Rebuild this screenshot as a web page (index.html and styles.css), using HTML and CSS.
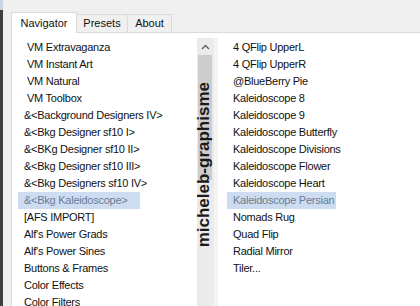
FILE: index.html
```
<!DOCTYPE html>
<html lang="en">
<head>
    <meta charset="UTF-8">
    <title>Filters Unlimited - Navigator</title>
    <link rel="stylesheet" href="styles.css">
</head>
<body>
    <div class="window">
        <div class="edge"></div>
        <div class="main">
            <div class="tabs">
                <div class="tab tab-nav active">Navigator</div>
                <div class="tab tab-presets">Presets</div>
                <div class="tab tab-about">About</div>
            </div>

            <div class="panel">
                <ul class="list list-left">
                    <li class="ind">VM Extravaganza</li>
                    <li class="ind">VM Instant Art</li>
                    <li class="ind">VM Natural</li>
                    <li class="ind">VM Toolbox</li>
                    <li>&amp;&lt;Background Designers IV&gt;</li>
                    <li>&amp;&lt;Bkg Designer sf10 I&gt;</li>
                    <li>&amp;&lt;BKg Designer sf10 II&gt;</li>
                    <li>&amp;&lt;Bkg Designer sf10 III&gt;</li>
                    <li>&amp;&lt;Bkg Designers sf10 IV&gt;</li>
                    <li class="sel">&amp;&lt;Bkg Kaleidoscope&gt;</li>
                    <li>[AFS IMPORT]</li>
                    <li>Alf's Power Grads</li>
                    <li>Alf's Power Sines</li>
                    <li>Buttons &amp; Frames</li>
                    <li>Color Effects</li>
                    <li>Color Filters</li>
                </ul>

                <div class="scrollbar">
                    <div class="arrow">
                        <svg width="9" height="6" viewBox="0 0 9 6">
                            <path d="M1 5 L4.5 1.5 L8 5" fill="none" stroke="#606060" stroke-width="1.3"/>
                        </svg>
                    </div>
                    <div class="thumb"></div>
                </div>
                <div class="splitter"></div>

                <ul class="list list-right">
                    <li>4 QFlip UpperL</li>
                    <li>4 QFlip UpperR</li>
                    <li>@BlueBerry Pie</li>
                    <li>Kaleidoscope 8</li>
                    <li>Kaleidoscope 9</li>
                    <li>Kaleidoscope Butterfly</li>
                    <li>Kaleidoscope Divisions</li>
                    <li>Kaleidoscope Flower</li>
                    <li>Kaleidoscope Heart</li>
                    <li class="sel">Kaleidoscope Persian</li>
                    <li>Nomads Rug</li>
                    <li>Quad Flip</li>
                    <li>Radial Mirror</li>
                    <li>Tiler...</li>
                </ul>

                <!-- watermark laid over the scrollbar -->
                <div class="watermark">micheleb-graphisme</div>
            </div>
        </div>
    </div>
</body>
</html>
```

FILE: styles.css
```
body {
    margin: 0;
    background: #f0f0f0;
    font-family: 'Liberation Sans', Arial, sans-serif;
    color: #111;
}
.window {
    display: flex;
    height: 306px;
    overflow: hidden;
}
.edge {
    width: 3px;
    background: linear-gradient(#c6d4e4 0 10px, #3f3f3f 10px);
}
.main {
    flex: 1;
    display: flex;
    flex-direction: column;
    padding: 12px 0 0 8px;
    min-width: 0;
}
.tabs {
    display: flex;
    align-items: flex-end;
    height: 20px;
}
.tab {
    box-sizing: border-box;
    height: 18px;
    border: 1px solid #d9d9d9;
    border-bottom: none;
    background: #f0f0f0;
    font-size: 11px;
    line-height: 16px;
    text-align: center;
    margin-left: -1px;
}
.tab.active {
    height: 21px;
    line-height: 20px;
    background: #fff;
    margin-left: 0;
    margin-bottom: -1px;
    position: relative;
    z-index: 1;
}
.tab-nav { width: 66px; }
.tab-presets { width: 52px; }
.tab-about { width: 45px; }
.panel {
    flex: 1;
    display: flex;
    align-items: flex-start;
    background: #fff;
    border-top: 1px solid #d9d9d9;
    border-left: 1px solid #d9d9d9;
    padding-top: 5px;
    position: relative;
    overflow: hidden;
}
.list {
    list-style: none;
    margin: 0;
    padding: 1px 0 0 6px;
    font-size: 11px;
    letter-spacing: -0.25px;
}
.list li {
    height: 17px;
    line-height: 17px;
    padding: 0 6px;
    width: fit-content;
    white-space: pre;
}
.list li.ind {
    padding-left: 9px;
}
.list li.sel {
    background: #cddcf1;
    color: #6a7c95;
}
.list-left {
    box-sizing: border-box;
    width: 185px;
}
.list-left li.sel {
    padding-right: 12px;
}
.list-right {
    padding-left: 9px;
}
.list-right li.sel {
    padding-right: 2px;
}
.scrollbar {
    width: 17px;
    align-self: stretch;
    background: #ebebeb;
    display: flex;
    flex-direction: column;
}
.arrow {
    height: 17px;
    display: flex;
    align-items: center;
    justify-content: center;
}
.thumb {
    height: 125px;
    margin: 0 2px 0 1px;
    background: #cdcdcd;
}
.splitter {
    width: 4px;
    align-self: stretch;
    background: #f4f4f4;
}
.watermark {
    position: absolute;
    left: 183px;
    top: 49px;
    writing-mode: vertical-rl;
    transform: rotate(180deg);
    font-size: 17px;
    line-height: 17px;
    font-weight: bold;
    color: #1a1a1a;
}
```
